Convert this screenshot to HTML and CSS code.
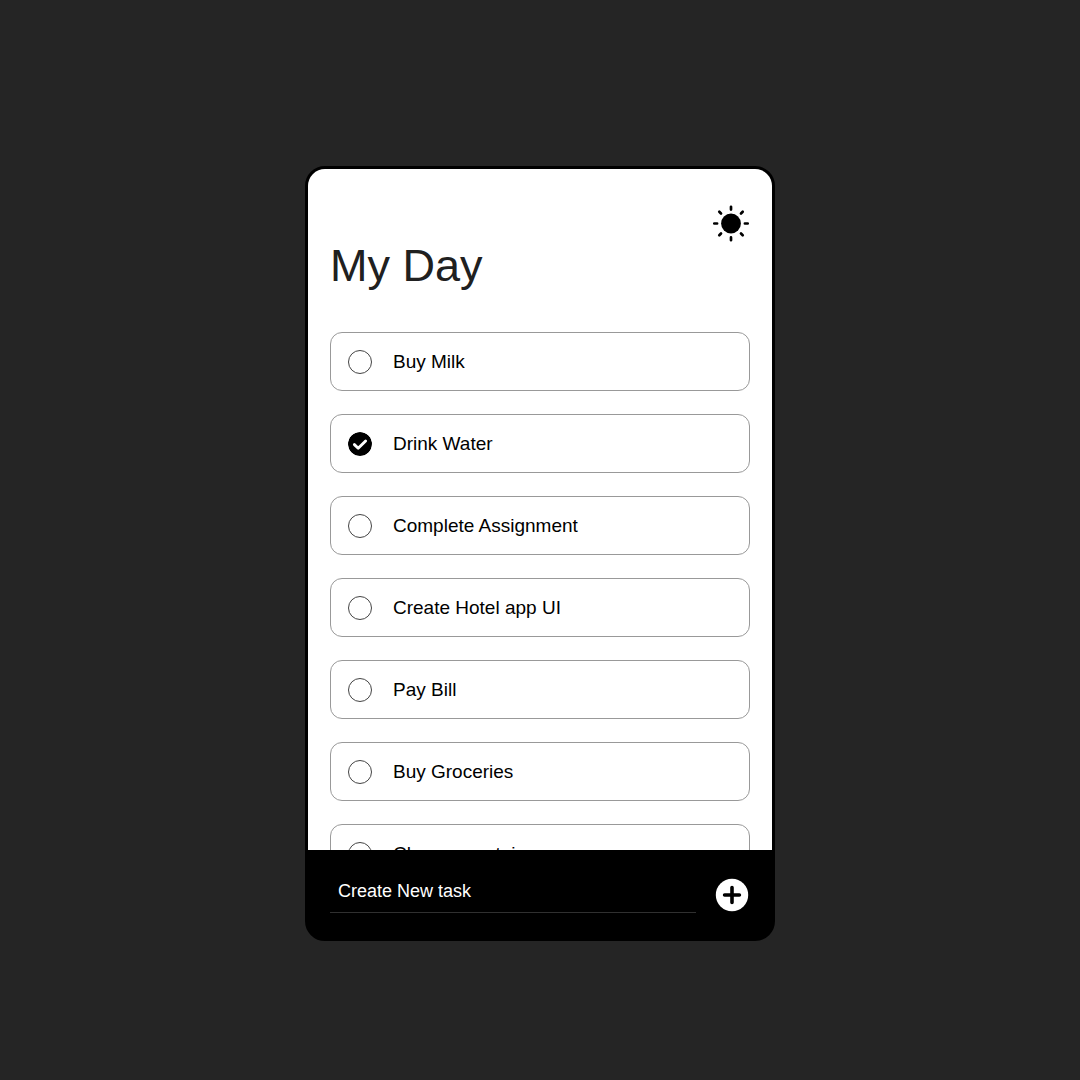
FILE: index.html
```html
<!DOCTYPE html>
<html lang="en">
<head>
<meta charset="utf-8">
<meta name="viewport" content="width=device-width, initial-scale=1">
<title>My Day</title>
<link rel="stylesheet" href="styles.css">
</head>
<body>
<main class="app">
  <header class="header">
    <button class="icon-button theme" type="button" aria-label="Toggle theme">
      <svg viewBox="1 0 36 36" width="36" height="36" aria-hidden="true" overflow="visible">
        <circle cx="18" cy="18.5" r="9.9"/>
        <path d="M18 1.8v2.8M18 32.4v2.8M1.3 18.5h2.8M31.9 18.5h2.8M6.3 6.8l1.7 1.7M28 28.5l1.7 1.7M6.3 30.2L8 28.5M28 8.5l1.7-1.7" stroke="#000" stroke-width="2.7" stroke-linecap="round"/>
      </svg>
    </button>
    <h1 class="title">My Day</h1>
  </header>
  <ul class="tasks">
    <li><label class="task"><input class="check" type="checkbox"><span>Buy Milk</span></label></li>
    <li><label class="task"><input class="check" type="checkbox" checked><span>Drink Water</span></label></li>
    <li><label class="task"><input class="check" type="checkbox"><span>Complete Assignment</span></label></li>
    <li><label class="task"><input class="check" type="checkbox"><span>Create Hotel app UI</span></label></li>
    <li><label class="task"><input class="check" type="checkbox"><span>Pay Bill</span></label></li>
    <li><label class="task"><input class="check" type="checkbox"><span>Buy Groceries</span></label></li>
    <li><label class="task"><input class="check" type="checkbox"><span>Clean mountain</span></label></li>
  </ul>
  <form class="composer">
    <input class="new-task" type="text" placeholder="Create New task" aria-label="Create New task">
    <button class="icon-button" type="button" aria-label="Add task">
      <svg viewBox="0 0 36 36" width="36" height="36" aria-hidden="true">
        <circle cx="18" cy="18" r="16.2" fill="#fff"/>
        <path d="M18 10.6v14.8M10.6 18h14.8" stroke="#000" stroke-width="3.6" stroke-linecap="round"/>
      </svg>
    </button>
  </form>
</main>
</body>
</html>
```
FILE: styles.css
```css
* {
  box-sizing: border-box;
}

body {
  margin: 0;
  min-height: 100vh;
  padding: 27px 16px 0;
  display: flex;
  align-items: center;
  justify-content: center;
  background: #252525;
  color: #000;
  font-family: "Liberation Sans", Arial, sans-serif;
}

.app {
  width: 100%;
  max-width: 470px;
  height: 775px;
  max-height: 100vh;
  display: flex;
  flex-direction: column;
  overflow: hidden;
  border: 3px solid #000;
  border-radius: 20px;
  background: #000;
}

.header {
  display: flex;
  flex-direction: column;
  padding: 36px 22px 41px;
  background: #fff;
}

.icon-button {
  flex: none;
  padding: 0;
  border: 0;
  background: none;
  line-height: 0;
  cursor: pointer;
}

.theme {
  align-self: flex-end;
}

.title {
  margin: 0;
  color: #202020;
  font-size: 45px;
  font-weight: 400;
  line-height: 50px;
}

.tasks {
  flex: 1;
  min-height: 0;
  margin: 0;
  padding: 0 22px;
  display: flex;
  flex-direction: column;
  gap: 23px;
  overflow: hidden;
  list-style: none;
  background: #fff;
}

.task {
  display: flex;
  align-items: center;
  gap: 21px;
  height: 59px;
  padding: 0 17px;
  border: 1px solid #999;
  border-radius: 12px;
  font-size: 19px;
  line-height: 24px;
}

.check {
  flex: none;
  appearance: none;
  width: 24px;
  height: 24px;
  margin: 0;
  border: 1px solid #444;
  border-radius: 50%;
}

.check:checked {
  border: 0;
  background: url('data:image/svg+xml,<svg xmlns="http://www.w3.org/2000/svg" viewBox="0 0 24 24"><circle cx="12" cy="12" r="12"/><path d="M6.4 12.6l3.8 3.6 7.4-7.2" fill="none" stroke="white" stroke-width="2.9" stroke-linecap="round" stroke-linejoin="round"/></svg>');
}

.composer {
  display: flex;
  align-items: flex-end;
  gap: 18px;
  padding: 21px 22px 25px;
  background: #000;
}

.new-task {
  flex: 1;
  min-width: 0;
  height: 42px;
  padding: 0 8px;
  border: 0;
  border-bottom: 1px solid #303030;
  outline: 0;
  background: none;
  color: #fff;
  font: 18px "Liberation Sans", Arial, sans-serif;
}

.new-task::placeholder {
  color: #fff;
  opacity: 1;
}
```
